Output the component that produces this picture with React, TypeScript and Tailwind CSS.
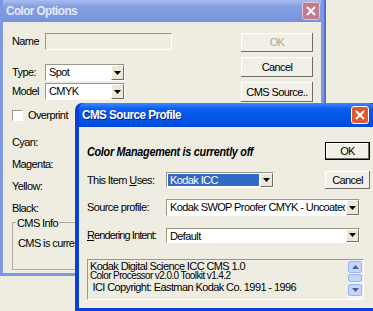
import React from "react";

const FONT = "font-['Liberation_Sans',Arial,sans-serif]";

function Arrow({ className = "" }: { className?: string }) {
  return (
    <svg width="7" height="4" viewBox="0 0 7 4" className={className}>
      <path d="M0 0h7L3.5 4z" fill="currentColor" />
    </svg>
  );
}

function DropBtn() {
  return (
    <div className="w-[13px] shrink-0 grid place-items-center bg-[#ECE9D8] border border-t-white border-l-white border-b-[#716F64] border-r-[#716F64] text-black">
      <Arrow />
    </div>
  );
}

function Select({
  value,
  className = "",
  selected = false,
}: {
  value: string;
  className?: string;
  selected?: boolean;
}) {
  return (
    <div
      className={
        "flex bg-white border border-t-[#9A978A] border-l-[#9A978A] border-b-white border-r-white " +
        className
      }
    >
      <div className="flex-1 min-w-0 p-px overflow-hidden">
        <div
          className={
            "h-full px-[2px] leading-[13px] whitespace-nowrap overflow-hidden " +
            (selected ? "bg-[#316AC5] text-white" : "text-black")
          }
        >
          {value}
        </div>
      </div>
      <DropBtn />
    </div>
  );
}

function Btn({
  children,
  className = "",
  disabled = false,
  isDefault = false,
}: {
  children: React.ReactNode;
  className?: string;
  disabled?: boolean;
  isDefault?: boolean;
}) {
  return (
    <div
      className={
        "grid place-items-center whitespace-nowrap bg-[#F0EFE8] shadow-[inset_-1px_-1px_0_#716F64,inset_1px_1px_0_#ffffff] " +
        (isDefault ? "border border-black " : "") +
        (disabled ? "text-[#ACA899] " : "text-black ") +
        className
      }
    >
      {children}
    </div>
  );
}

function CloseBtn({ active }: { active: boolean }) {
  return (
    <div
      className={
        "w-[18px] h-[18px] rounded-[3px] border grid place-items-center " +
        (active
          ? "bg-[#E0582C] border-white"
          : "bg-[#C27A8F] border-[#E4C6D0]")
      }
    >
      <svg width="10" height="10" viewBox="0 0 10 10">
        <path d="M1 1L9 9M9 1L1 9" stroke="white" strokeWidth="2" />
      </svg>
    </div>
  );
}

function ColorOptions() {
  return (
    <div className="absolute left-0 top-0 w-[326px] h-[276px] flex flex-col bg-[#7D98E0] px-[3px] pb-[3px] border-r-2 border-r-[#4F70D4]">
      <div className="h-[22px] shrink-0 flex items-center justify-between pl-[3px] pr-[1px] bg-[linear-gradient(#A9BDF1,#859FE3_30%,#7C97E0_80%,#7591DC)]">
        <span className="text-[13px] font-bold text-[#E3EAFA] tracking-[-0.6px] scale-x-90 origin-left">
          Color Options
        </span>
        <CloseBtn active={false} />
      </div>
      <div className="flex-1 bg-[#EFEDE1] flex justify-between pl-[9px] pr-[8px] pt-[11px] text-[11px] tracking-[-0.6px] text-black">
        <div className="flex flex-col">
          <div className="flex items-center h-[17px]">
            <span className="w-[33px]">Name</span>
            <div className="w-[127px] h-[17px] bg-[#EFEDE1] border border-t-[#9A978A] border-l-[#9A978A] border-b-white border-r-white" />
          </div>
          <div className="flex items-center h-[17px] mt-[14px]">
            <span className="w-[33px]">Type:</span>
            <Select value="Spot" className="w-[80px] h-[17px]" />
          </div>
          <div className="flex items-center h-[17px] mt-[2px]">
            <span className="w-[33px]">Model</span>
            <Select value="CMYK" className="w-[80px] h-[17px]" />
          </div>
          <div className="flex items-center h-[13px] mt-[9px]">
            <div className="w-[11px] h-[11px] bg-white border border-t-[#9A978A] border-l-[#9A978A] border-b-white border-r-white" />
            <span className="ml-[5px]">Overprint</span>
          </div>
          <div className="mt-[12px] h-[22px]">Cyan:</div>
          <div className="h-[22px]">Magenta:</div>
          <div className="h-[22px]">Yellow:</div>
          <div className="h-[16px]">Black:</div>
          <div className="relative w-[200px] h-[48px] mt-[6px] border border-[#B0AD9F]">
            <span className="absolute -top-[8px] left-[3px] bg-[#EFEDE1] px-[1px]">
              CMS Info
            </span>
            <div className="pl-[5px] pt-[12px]">CMS is currently off</div>
          </div>
        </div>
        <div className="flex flex-col gap-[5px] w-[72px]">
          <Btn disabled className="h-[19px]">OK</Btn>
          <Btn className="h-[20px]">Cancel</Btn>
          <Btn className="h-[20px]">CMS Source..</Btn>
        </div>
      </div>
    </div>
  );
}

function CmsSource() {
  return (
    <div className="absolute left-[75px] top-[103px] w-[304px] h-[208px] flex flex-col bg-[#0A3FD8] rounded-t-[7px] px-[4px] pb-[3px]">
      <div className="h-[24px] shrink-0 flex items-center justify-between pl-[3px] pr-[6px] rounded-t-[6px] bg-[linear-gradient(#3A8BFF,#0A5CEF_25%,#0055E5_70%,#0047D6)]">
        <span className="text-[13px] font-bold text-white tracking-[-0.6px] scale-x-90 origin-left [text-shadow:1px_1px_0_#0A1E8C]">
          CMS Source Profile
        </span>
        <CloseBtn active />
      </div>
      <div className="flex-1 bg-[#EFEDE1] pl-[8px] pr-[9px] text-[11px] tracking-[-0.6px] text-black">
        <div className="flex justify-between">
          <div className="flex flex-col">
            <div className="mt-[19px] h-[12px] leading-[12px] font-bold italic text-[12px] tracking-[-0.3px] scale-x-90 origin-left whitespace-nowrap">
              Color Management is currently off
            </div>
            <div className="flex items-center mt-[14px]">
              <span className="w-[79px] whitespace-nowrap">
                This Item <span className="underline">U</span>ses:
              </span>
              <Select value="Kodak ICC" selected className="w-[108px] h-[16px]" />
            </div>
          </div>
          <div className="flex flex-col w-[45px] mr-[-4px]">
            <Btn isDefault className="h-[18px] mt-[15px]">OK</Btn>
            <Btn className="h-[18px] mt-[11px]">Cancel</Btn>
          </div>
        </div>
        <div className="flex items-center mt-[10px]">
          <span className="w-[79px] whitespace-nowrap">Source profile:</span>
          <Select
            value="Kodak SWOP Proofer CMYK - Uncoated St"
            className="w-[194px] h-[17px]"
          />
        </div>
        <div className="flex items-center mt-[11px]">
          <span className="w-[79px] whitespace-nowrap tracking-[-0.9px]">
            <span className="underline">R</span>endering Intent:
          </span>
          <Select value="Default" className="w-[194px] h-[15px]" />
        </div>
        <div className="mt-[15px] w-[277px] h-[41px] flex bg-[#EFEDE1] border border-t-[#9A978A] border-l-[#9A978A] border-b-white border-r-white">
          <div className="flex-1 pl-[2px] pt-[1px] leading-[10.5px] whitespace-nowrap overflow-hidden">
            <div>Kodak Digital Science ICC CMS 1.0</div>
            <div className="text-[10px]">Color Processor v2.0.0 Toolkit v1.4.2</div>
            <div>&nbsp;ICI Copyright: Eastman Kodak Co. 1991 - 1996</div>
          </div>
          <div className="w-[14px] shrink-0 flex flex-col bg-[#F3F6FD] mr-[1px]">
            <div className="h-[12px] mt-[1px] rounded-[2px] bg-[#C6D5FB] border border-[#9CB4F0] grid place-items-center text-[#4D6185]">
              <Arrow className="rotate-180" />
            </div>
            <div className="h-[8px] mt-[1px] rounded-[2px] bg-[#C6D5FB] border border-[#9CB4F0]" />
            <div className="flex-1" />
            <div className="h-[12px] mb-[3px] rounded-[2px] bg-[#C6D5FB] border border-[#9CB4F0] grid place-items-center text-[#4D6185]">
              <Arrow />
            </div>
          </div>
        </div>
      </div>
    </div>
  );
}

export default function App() {
  return (
    <div className={"relative w-[373px] h-[311px] overflow-hidden bg-[#EFEDE1] " + FONT}>
      <ColorOptions />
      <CmsSource />
    </div>
  );
}
